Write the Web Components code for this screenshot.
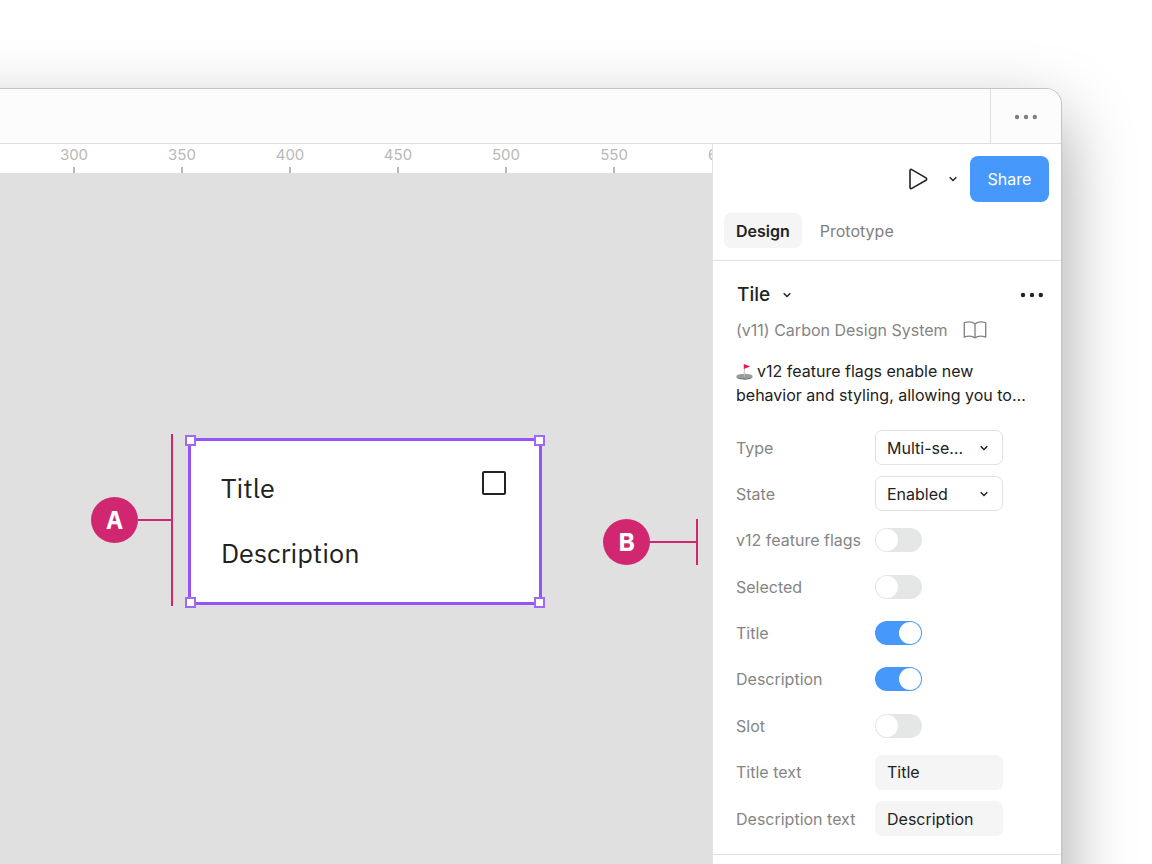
<!DOCTYPE html>
<html lang="en">
<head>
<meta charset="utf-8">
<meta name="viewport" content="width=device-width, initial-scale=1">
<title>Tile – design file</title>
<style>
  html, body { margin: 0; height: 100%; }
  body { background: #fff; color: #222; font: 16px/24px Inter, "Liberation Sans", sans-serif; overflow: hidden; }
</style>
</head>
<body>
<app-window>
  <title-bar slot="title"></title-bar>
  <ruler-bar slot="ruler" marks="300 350 400 450 500 550 600"></ruler-bar>
  <design-canvas slot="canvas">
    <canvas-note style="--x:91px;--y:261px;--h:172px;--line:33px">A</canvas-note>
    <tile-card>
      <span slot="title">Title</span>
      <span slot="description">Description</span>
    </tile-card>
    <canvas-note style="--x:603px;--y:346px;--h:46px;--line:46px">B</canvas-note>
  </design-canvas>
  <side-panel slot="panel">
    <panel-header slot="header"></panel-header>
    <component-summary></component-summary>
    <property-list>
      <property-row kind="select" label="Type" value="Multi-se…"></property-row>
      <property-row kind="select" label="State" value="Enabled"></property-row>
      <property-row kind="switch" label="v12 feature flags"></property-row>
      <property-row kind="switch" label="Selected"></property-row>
      <property-row kind="switch" label="Title" checked></property-row>
      <property-row kind="switch" label="Description" checked></property-row>
      <property-row kind="switch" label="Slot"></property-row>
      <property-row kind="text" label="Title text" value="Title"></property-row>
      <property-row kind="text" label="Description text" value="Description"></property-row>
    </property-list>
  </side-panel>
</app-window>

<script>
// Registers an element whose shadow root is cloned from a template; html may be a function of the element.
const define = (name, html) => {
  const template = document.createElement('template');
  customElements.define(name, class extends HTMLElement {
    constructor() { super(); this.attachShadow({ mode: 'open' }); }
    connectedCallback() {
      if (this.shadowRoot.childNodes.length) return;
      template.innerHTML = typeof html === 'function' ? html(this) : html;
      this.shadowRoot.append(template.content.cloneNode(true));
    }
  });
};

const icons = {
  dots: [24, 6, '<g fill="currentColor"><circle cx="3" cy="3" r="2.2"/><circle cx="12" cy="3" r="2.2"/><circle cx="20.800" cy="3" r="2.200"/></g>'],
  chevron: [10, 6, '<path d="M1.700 1.300 5 4.500 8.300 1.300" stroke="currentColor" stroke-width="1.500"/>'],
  play: [20, 22, '<path d="M2 2.600v16.800c0 1 1 1.500 1.800 1L18 12.200c.9-.5.9-1.700 0-2.300L3.800 1.600c-.8-.5-1.800 0-1.800 1Z" stroke="currentColor" stroke-width="1.600" stroke-linejoin="round"/>'],
  book: [24, 18, '<path d="M12 3C9.800.9 4.800.700 1.300 1.600V16C4.800 15 9.800 15 12 17M12 3C14.200.900 19.200.700 22.700 1.600V16C19.200 15 14.200 15 12 17M12 3V17" stroke="currentColor" stroke-width="1.400" stroke-linejoin="round"/>'],
  flag: [18, 18, '<ellipse cx="8.500" cy="13.500" rx="8.200" ry="2.700" fill="#9a9d9d"/><path d="M.4 14C1.500 17.500 15.500 17.500 16.600 14 13 16 4.500 16 .4 14Z" fill="#6f7272"/><path d="M8.300 2V13.500" stroke="#c4c4c4"/><path d="M7.800 1 14.300 3.400 7.800 6Z" fill="#e3195f"/>']
};
define('ui-icon', el => {
  const [w, h, body] = icons[el.getAttribute('name')];
  return `<style>:host{display:inline-flex;flex:none}svg{display:block}</style>
    <svg width="${w}" height="${h}" viewBox="0 0 ${w} ${h}" fill="none" aria-hidden="true">${body}</svg>`;
});

define('app-window', `
  <style>
    :host { display: block; height: 100vh; box-sizing: border-box; padding: 88px 90px 0 0; overflow: hidden; }
    .frame { position: relative; height: 100%; display: flex; flex-direction: column; border: 1px solid #c4c4c4; border-width: 1px 1px 0 0; border-top-right-radius: 16px; background: #fff; }
    .frame::before { content: ""; position: absolute; z-index: -1; inset: 0 0 -160px -160px; border-radius: 16px; box-shadow: 0 28px 70px rgba(0, 0, 0, .38); }
    .body { flex: 1; min-height: 0; display: flex; }
    .work { flex: 1; min-width: 0; display: flex; flex-direction: column; }
  </style>
  <div class="frame">
    <slot name="title"></slot>
    <div class="body">
      <main class="work"><slot name="ruler"></slot><slot name="canvas"></slot></main>
      <slot name="panel"></slot>
    </div>
  </div>`);

define('title-bar', `
  <style>
    :host { display: flex; justify-content: flex-end; flex: none; height: 54px; border-bottom: 1px solid #dedede; background: #fcfcfc; border-top-right-radius: 15px; }
    button { width: 71px; border: 0; border-left: 1px solid #dedede; padding: 0 0 2px; background: none; color: #808080; }
  </style>
  <button aria-label="Window menu"><ui-icon name="dots"></ui-icon></button>`);

define('ruler-bar', el => `
  <style>
    :host { display: flex; flex: none; height: 29px; padding-left: 20px; overflow: hidden; background: #fff; color: #b8b8b8; font-size: 15px; line-height: 22px; }
    span { flex: none; width: 108px; text-align: center; background: linear-gradient(#b8b8b8, #b8b8b8) bottom center / 2px 6px no-repeat; }
  </style>
  ${el.getAttribute('marks').split(' ').map(m => `<span>${m}</span>`).join('')}`);

define('design-canvas', `
  <style>:host { display: block; position: relative; flex: 1; min-height: 0; background: #e0e0e0; overflow: hidden; }</style>
  <slot></slot>`);

define('canvas-note', `
  <style>
    :host { position: absolute; left: var(--x); top: var(--y); height: var(--h); display: flex; align-items: center; color: #fff; font: 700 25px/46px "IBM Plex Sans", Roboto, sans-serif; }
    b { width: 47px; border-radius: 50%; background: #d12771; text-align: center; }
    i { width: var(--line); height: 2px; background: #d12771; }
    s { width: 2px; height: 100%; background: #d12771; }
  </style>
  <b><slot></slot></b><i></i><s></s>`);

define('tile-card', `
  <style>
    :host { position: absolute; left: 188px; top: 265px; width: 354px; height: 167px; box-sizing: border-box; border: 3px solid #9654f7; background: #fff; color: #222; font: 27px/32px "IBM Plex Sans", Roboto, sans-serif; }
    .content { display: grid; grid-template-columns: 1fr 24px; row-gap: 33px; padding: 31px 33px 0 30px; }
    input { appearance: none; width: 24px; height: 24px; margin: -1px 0 0; border: 2px solid #222; border-radius: 2px; }
    .handle { position: absolute; width: 11px; height: 11px; box-sizing: border-box; border: 2px solid #9f68f8; background: #fff; }
    .t { top: -6px; } .b { bottom: -6px; } .l { left: -6px; } .r { right: -6px; }
  </style>
  <div class="content">
    <slot name="title"></slot>
    <input type="checkbox" aria-label="Select tile">
    <slot name="description"></slot>
  </div>
  <div class="handle t l"></div><div class="handle t r"></div>
  <div class="handle b l"></div><div class="handle b r"></div>`);

define('side-panel', `
  <style>
    :host { display: block; flex: none; width: 349px; box-sizing: border-box; border-left: 1px solid #e3e3e3; background: #fff; overflow: hidden; }
    section { padding: 22px 17px 18px 23px; border-bottom: 1px solid #e3e3e3; }
  </style>
  <slot name="header"></slot>
  <section><slot></slot></section>`);

define('panel-header', `
  <style>
    :host { display: block; padding: 12px 12px 12px 11px; border-bottom: 1px solid #e3e3e3; }
    button { border: 0; padding: 0; background: none; font: inherit; color: #222; display: flex; align-items: center; }
    .actions { display: flex; justify-content: flex-end; align-items: center; margin-bottom: 11px; }
    .more { margin: 0 12px 0 20px; padding: 8px 0; }
    .share { width: 79px; height: 46px; justify-content: center; border-radius: 8px; background: #4699fa; color: #fff; }
    .tabs { display: flex; gap: 6px; }
    .tabs button { height: 35px; padding: 0 12px; border-radius: 7px; color: #808080; }
    .tabs [aria-selected=true] { background: #f5f5f5; color: #222; font-weight: 600; }
  </style>
  <div class="actions">
    <button aria-label="Present"><ui-icon name="play"></ui-icon></button>
    <button class="more" aria-label="Present options"><ui-icon name="chevron"></ui-icon></button>
    <button class="share">Share</button>
  </div>
  <div class="tabs" role="tablist">
    <button role="tab" aria-selected="true">Design</button>
    <button role="tab" aria-selected="false">Prototype</button>
  </div>`);

define('component-summary', `
  <style>
    :host { display: block; margin-bottom: 23px; }
    button { border: 0; padding: 0; background: none; font: inherit; color: inherit; display: flex; align-items: center; gap: 12px; }
    .head { display: flex; justify-content: space-between; margin-bottom: 11px; }
    h2 { margin: 0; padding-left: 1px; font-size: 19px; line-height: 24px; font-weight: 500; }
    .library { display: flex; align-items: center; gap: 15px; margin-bottom: 17px; color: #858585; }
    p { margin: 0; }
    p ui-icon { vertical-align: -4px; margin-right: 3px; }
  </style>
  <div class="head">
    <h2><button>Tile <ui-icon name="chevron"></ui-icon></button></h2>
    <button aria-label="More actions"><ui-icon name="dots"></ui-icon></button>
  </div>
  <div class="library">(v11) Carbon Design System <ui-icon name="book"></ui-icon></div>
  <p><ui-icon name="flag"></ui-icon>v12 feature flags enable new<br>behavior and styling, allowing you to…</p>`);

define('property-list', `
  <style>:host { display: flex; flex-direction: column; justify-content: space-between; height: 406px; }</style>
  <slot></slot>`);

const controls = {
  select: el => `<span class="select"><select id="c"><option>${el.getAttribute('value')}</option></select><ui-icon name="chevron"></ui-icon></span>`,
  switch: el => `<input id="c" type="checkbox" role="switch"${el.hasAttribute('checked') ? ' checked' : ''}>`,
  text: el => `<input id="c" type="text" value="${el.getAttribute('value')}">`
};
define('property-row', el => `
  <style>
    :host { display: grid; grid-template-columns: 127px 128px; column-gap: 12px; align-items: center; height: 35px; }
    label { color: #858585; white-space: nowrap; }
    select, [type=text] { appearance: none; box-sizing: border-box; width: 100%; height: 35px; margin: 0; border: 0; border-radius: 7px; padding: 0 12px; background: #f5f5f5; color: #222; font: inherit; }
    .select { display: grid; align-items: center; }
    select, .select ui-icon { grid-area: 1 / 1; }
    select { border: 1px solid #e2e2e2; padding: 0 11px; background: #fff; }
    .select ui-icon { justify-self: end; margin-right: 14px; pointer-events: none; }
    [role=switch] { appearance: none; width: 47px; height: 24px; margin: 0; padding: 1px; box-sizing: border-box; border-radius: 12px; background: #e5e6e6; display: flex; }
    [role=switch]::before { content: ""; width: 22px; height: 22px; border-radius: 50%; background: #fff; }
    [role=switch]:checked { background: #4699fa; justify-content: flex-end; }
  </style>
  <label for="c">${el.getAttribute('label')}</label>
  ${controls[el.getAttribute('kind')](el)}`);
</script>
</body>
</html>
